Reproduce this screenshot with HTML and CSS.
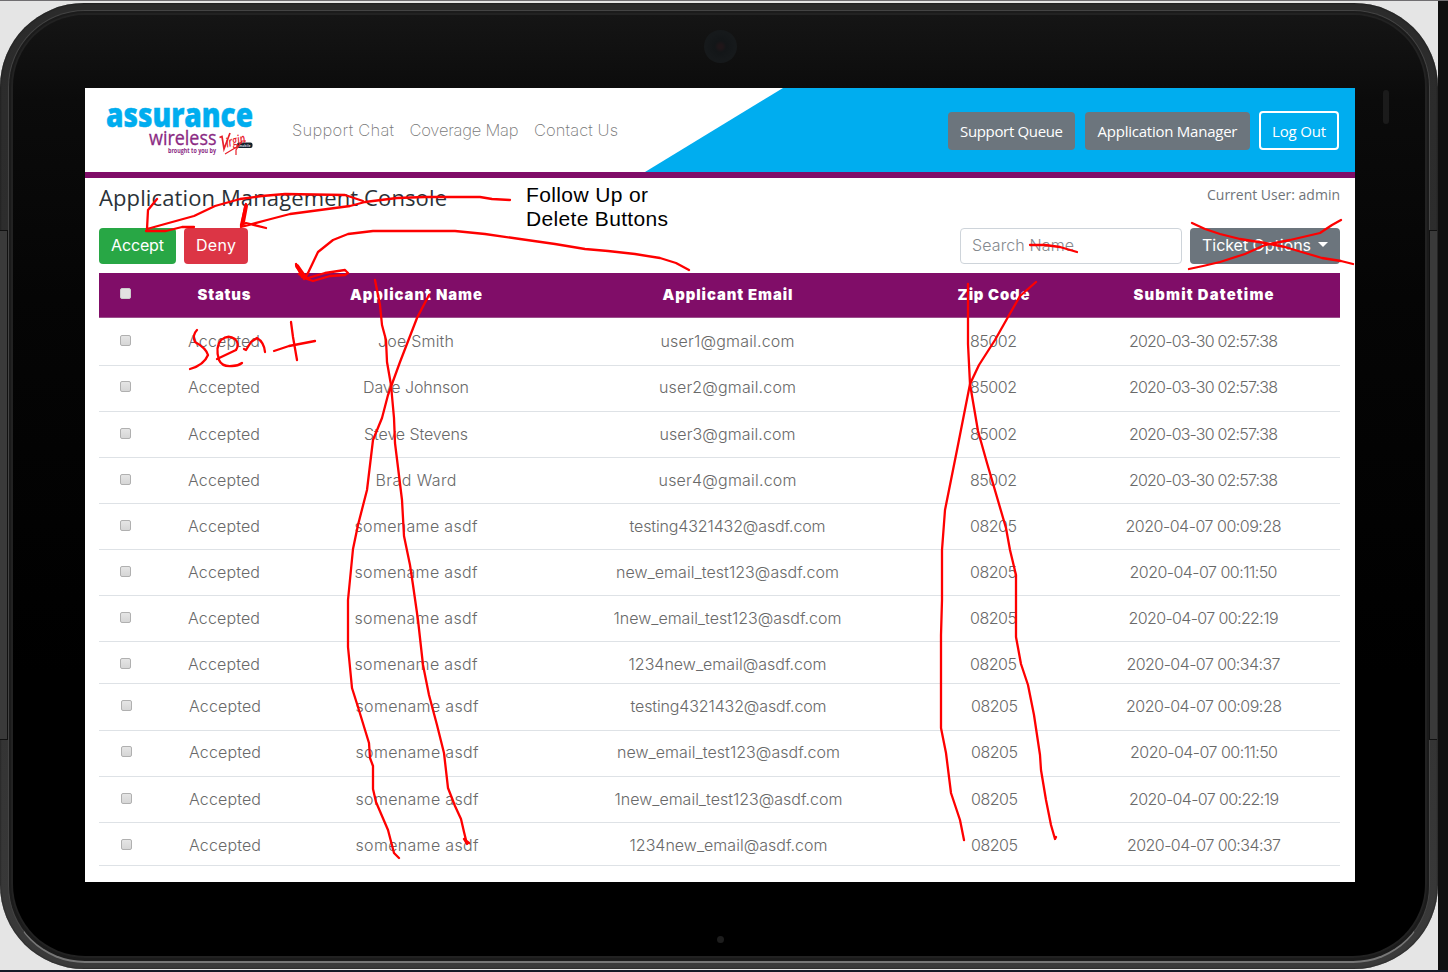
FILE: index.html
```html
<!DOCTYPE html>
<html lang="en">
<head>
<meta charset="utf-8">
<title>Application Management Console</title>
<link rel="stylesheet" href="styles.css">
</head>
<body>
<div class="stage">
  <div class="tablet">
    <div class="rim"><div class="rim-line"><div class="glass">
      <main class="screen">
        <header class="top">
          <svg class="swoosh" viewBox="0 0 1270 84"><path d="M698 0H1270V84H560Z" fill="#00adef"/></svg>
          <svg class="logo" viewBox="0 0 150 56">
            <text class="logo-main" x="0" y="23" textLength="147" lengthAdjust="spacingAndGlyphs">assurance</text>
            <text class="logo-sub" x="43" y="41" textLength="67.500" lengthAdjust="spacingAndGlyphs">wireless</text>
            <text class="logo-by" x="62" y="48.500" textLength="48" lengthAdjust="spacingAndGlyphs">brought to you by</text>
            <rect x="131" y="38.500" width="15.500" height="5.500" rx="2" fill="#12202b"/>
            <text class="logo-mobile" x="133" y="43" textLength="11.500" lengthAdjust="spacingAndGlyphs">mobile</text>
            <path d="M113.500 33.500L116 32.500L118 45L124 29" fill="none" stroke="#e8202a" stroke-width="1.700"/>
            <text class="logo-virgin" transform="translate(121 43.500) rotate(-15)" textLength="20" lengthAdjust="spacingAndGlyphs">irgin</text>
            <path d="M119 50L134 41M140 37H136L130 46L130 51" fill="none" stroke="#e8202a" stroke-width="1.200"/>
          </svg>
          <nav class="links">
            <a><span data-w="102">Support Chat</span></a>
            <a><span data-w="109">Coverage Map</span></a>
            <a><span data-w="84">Contact Us</span></a>
          </nav>
          <div class="actions">
            <button class="btn grey queue"><span data-w="103">Support Queue</span></button>
            <button class="btn grey manager"><span data-w="140">Application Manager</span></button>
            <button class="btn outline"><span data-w="54">Log Out</span></button>
          </div>
        </header>
        <section class="console">
          <div class="title-row">
            <h1><span data-w="348">Application Management Console</span></h1>
            <p class="user"><span data-w="133">Current User: admin</span></p>
          </div>
          <div class="tools">
            <button class="btn mont green"><span data-w="53">Accept</span></button>
            <button class="btn mont red"><span data-w="40">Deny</span></button>
            <div class="search"><span data-w="102">Search Name</span></div>
            <button class="btn mont grey options"><span data-w="109">Ticket Options</span><i class="caret"></i></button>
          </div>
          <div class="table" id="table">
            <div class="row head">
              <div><i class="check"></i></div>
              <div><span data-w="53">Status</span></div>
              <div><span data-w="132">Applicant Name</span></div>
              <div><span data-w="130">Applicant Email</span></div>
              <div><span data-w="72">Zip Code</span></div>
              <div><span data-w="140">Submit Datetime</span></div>
            </div>
          </div>
        </section>
      </main>
    </div></div></div>
    <i class="camera"></i><i class="mic"></i><i class="speaker"></i>
    <i class="side left"></i><i class="side right"></i>
  </div>
  <div class="edge"></div>
  <div class="bottom-bar"></div>
  <p class="note"><span data-w="122">Follow Up or</span><br><span data-w="142">Delete Buttons</span></p>
  <svg class="ink" viewBox="0 0 1448 972">
    <path d="M157 199L148 210L147 229L165 224L194 216L215 206L240 199L262 196L285 194L345 195L363 201"/>
    <path d="M146 231H166L182 227H194"/>
    <path d="M510 200L492 199L480 197H425L397 198L365 202L350 206L320 210L290 214L267 220L241 227L246 204L241 225L246 223L266 228"/>
    <path d="M243 222L246 206" stroke-width="4"/>
    <path d="M689 270L676 263L660 258L635 254L608 251L585 249L555 244L520 239L485 234L455 231H373L348 234L333 240L318 252L308 273L304 279L296 264L302 277L308 278L325 273L345 270L348 273L345 275L330 276L313 281L307 279L299 274"/>
    <path d="M297 266L304 276" stroke-width="4"/>
    <path d="M1030 245L1045 245L1060 247L1077 252"/>
    <path d="M1192 223L1205 229L1220 234L1240 239L1265 243L1285 247L1305 253L1322 258L1341 261L1353 264"/>
    <path d="M1189 269L1203 266L1220 262L1245 254L1265 245L1290 240L1320 233L1332 225L1341 220"/>
    <path d="M197 330Q192 335 195 342Q206 348 208 355Q204 365 190 369"/>
    <path d="M217 359L236 350Q240 344 235 339Q228 334 221 340Q215 347 219 360Q222 367 232 366Q238 366 242 363"/>
    <path d="M244 349L246 350L251 342L257 338Q264 342 265 352"/>
    <path d="M291 322L293 337L297 360M274 351L289 346L315 341"/>
    <path d="M375 280L380 305L382 325L386 340L387 362L391 385L394 418L395 443L402 500L404 536L410 565L413 585L418 620L423 665L429 695L437 725L444 753L448 788L455 806L461 819L464 832L467 844L464 839L469 843"/>
    <path d="M429 295L417 318L400 362L388 395L382 418L373 440L367 490L358 525L353 549L348 600V647L352 688L358 707L369 743L370 758L373 766V789L376 802L388 830L394 853L399 858"/>
    <path d="M968 284V344L970 384L978 431L987 463L1006 528L1010 550L1016 575V637L1021 664L1028 685L1034 715L1040 755L1041 770L1046 800L1051 825L1055 839L1056 837"/>
    <path d="M1036 282L1020 296L1008 317L995 340L979 365L970 384L957 450L945 510L942 550V600L941 635V728L946 753L951 793L960 820L964 840"/>
  </svg>
</div>
<script src="app.js"></script>
</body>
</html>
```
FILE: styles.css
```css
* { box-sizing: border-box; }
body { margin: 0; background: #e5e5e5; overflow: hidden; }
p, h1 { margin: 0; }
i { display: block; }
.stage { position: relative; width: 1448px; height: 972px; padding-top: 2px; border-top: 1px solid #706e71; overflow: hidden; }
.tablet { position: relative; width: 1438px; height: 966px; }
.rim { height: 966px; width: 1438px; border-radius: 84px; padding: 7px 8px 6px; background: linear-gradient(180deg, #2b2b2b, #303030 60%, #3a3a3a); box-shadow: inset 0 0 2px #111; }
.rim-line { height: 100%; border-radius: 77px; border: 1px solid #444; border-bottom: 2px solid #777; background: #1b1b1b; padding: 4px 4px 5px; }
.glass { height: 100%; border-radius: 72px; padding: 73px 0 0 72px; background: linear-gradient(180deg, #151515, #0b0b0b 9%, #050505 30%, #000 70%); box-shadow: 0 0 0 2px #222; }
.screen { width: 1270px; height: 794px; background: #fff; overflow: hidden; font-family: "Open Sans", "Noto Sans", sans-serif; }
.top { position: relative; height: 90px; border-bottom: 6px solid #800d68; display: flex; align-items: center; }
.swoosh { position: absolute; left: 0; top: 0; width: 1270px; height: 84px; }
.logo { position: relative; width: 150px; height: 56px; margin: 4px 0 0 21px; overflow: visible; flex: none; }
.logo-main { font: 800 34px "Open Sans", sans-serif; fill: #00adef; stroke: #00adef; stroke-width: .5px; }
.logo-sub { font: 400 20px "Open Sans", sans-serif; fill: #8b2a83; stroke: #8b2a83; stroke-width: .3px; }
.logo-by { font: 700 7px "Open Sans", sans-serif; fill: #8b2a83; }
.logo-mobile { font: 700 4px "Open Sans", sans-serif; fill: #cdd5da; }
.logo-virgin { font: italic 600 13px "Open Sans", sans-serif; fill: #e8202a; }
.links { display: flex; gap: 15.5px; margin-left: 36px; font: 200 16.5px/24px Inter, sans-serif; color: #777; }
.actions { position: relative; display: flex; gap: 10px; margin-left: auto; padding-right: 16px; padding-top: 1px; }
.btn { display: flex; align-items: center; justify-content: center; height: 36px; padding: 0; border: 0; border-radius: 4px; color: #fff; font: 400 15px "Open Sans", sans-serif; }
.grey { background: #6c757d; }
.queue { width: 127px; height: 38px; }
.manager { width: 165px; height: 38px; }
.outline { width: 80px; height: 39px; margin-left: -1px; margin-top: -1px; padding-top: 1px; background: none; border: 2px solid #fff; }
.console { padding: 0 15px 0 14px; }
.title-row { display: flex; justify-content: space-between; height: 50px; color: #2b3238; }
h1 { font: 400 22px/39px "Open Sans", sans-serif; }
.user { font-size: 14px; line-height: 34px; color: #6f7479; }
.tools { display: flex; height: 45px; gap: 8px; }
.mont { font: 400 16px Inter, sans-serif; padding-bottom: 2px; }
.green { width: 77px; background: #28a745; }
.red { width: 64px; background: #dc3545; }
.search { width: 222px; height: 36px; margin-left: auto; padding-left: 11px; border: 1px solid #ced4da; border-radius: 4px; font: 300 16px/33px Inter, sans-serif; color: #85898e; }
.options { width: 150px; gap: 7px; }
.caret { border: 5px solid transparent; border-top-color: #fff; border-bottom: 0; margin-top: -1px; }
.table { font: 300 16px/20px Inter, sans-serif; color: #696969; }
.row { display: grid; grid-template-columns: 52px 146px 238px 385px 147px 1fr; height: 46.15px; border-bottom: 1px solid #dee2e6; padding-top: 11.800px; text-align: center; }
.head { height: 45px; padding-top: 12px; margin-bottom: 1.5px; background: #800d68; color: #fff; font-weight: 900; font-size: 14.800px; border-bottom-color: #9b4f8c; }
.short { height: 42px; }
.last { height: 43px; }
.late { padding-left: 1px; }
.check { width: 11px; height: 11px; margin: 4px auto 0; border: 1px solid #b0b0b0; border-radius: 2px; background: linear-gradient(#e5e5e5, #d6d6d6); }
.head .check { margin-top: 3px; border-color: #ccc; background: #e2e2e2; }
.camera { position: absolute; left: 704px; top: 27px; width: 33px; height: 33px; border-radius: 50%; background: radial-gradient(#201619 0 8%, #131618 25%, #16191b 60%, #171a1b); }
.mic { position: absolute; left: 717px; top: 933px; width: 7px; height: 7px; border-radius: 50%; background: #1d1d1d; }
.speaker { position: absolute; left: 1383px; top: 87px; width: 6px; height: 34px; border-radius: 3px; background: #1b1b1b; }
.side { position: absolute; top: 227px; height: 510px; border: 1px solid #111; background: #3a3a3a; }
.side.left { left: 0; width: 8px; border-left: 0; }
.side.right { left: 1429px; width: 8px; border-right: 0; }
.edge { position: absolute; right: 0; top: 0; width: 10px; height: 972px; background: #0f0f0f; }
.bottom-bar { position: absolute; left: 0; top: 969px; width: 1448px; height: 3px; background: #151a28; }
.note { position: absolute; left: 526px; top: 182px; font: 21px/24px "Liberation Sans", Arial, sans-serif; color: #000; }
.ink { position: absolute; left: 0; top: -1px; width: 1448px; height: 972px; fill: none; stroke: #fe0000; stroke-width: 2.300; stroke-linecap: round; stroke-linejoin: round; }
[data-w] { display: inline-block; white-space: nowrap; }
```
FILE: app.js
```js
const emails = {
  'user1@gmail.com': 134, 'user2@gmail.com': 137, 'user3@gmail.com': 136, 'user4@gmail.com': 138,
  'testing4321432@asdf.com': 196, 'new_email_test123@asdf.com': 223,
  '1new_email_test123@asdf.com': 228, '1234new_email@asdf.com': 198
};
const widths = {
  ...emails, 'Accepted': 72, 'Joe Smith': 76, 'Dave Johnson': 106, 'Steve Stevens': 104,
  'Brad Ward': 81, 'somename asdf': 123, '85002': 47, '08205': 47,
  '2020-03-30 02:57:38': 149, '2020-04-07 00:09:28': 156, '2020-04-07 00:11:50': 148,
  '2020-04-07 00:22:19': 150, '2020-04-07 00:34:37': 154
};
const first = ['Joe Smith', 'Dave Johnson', 'Steve Stevens', 'Brad Ward'];
const later = [
  ['testing4321432@asdf.com', '00:09:28'],
  ['new_email_test123@asdf.com', '00:11:50'],
  ['1new_email_test123@asdf.com', '00:22:19'],
  ['1234new_email@asdf.com', '00:34:37']
];
const rows = first.map((n, i) => [n, `user${i + 1}@gmail.com`, '85002', '2020-03-30 02:57:38']);
for (let i = 0; i < 9; i++) {
  const [mail, time] = later[i % 4];
  rows.push(['somename asdf', mail, '08205', '2020-04-07 ' + time]);
}
const table = document.getElementById('table');
rows.forEach((r, i) => {
  const row = document.createElement('div');
  row.className = 'row' + (i === 7 ? ' short' : '') + (i === 11 ? ' last' : '') + (i > 7 ? ' late' : '');
  row.innerHTML = '<div><i class="check"></i></div>' +
    ['Accepted', ...r].map(t => `<div><span data-w="${widths[t]}">${t}</span></div>`).join('');
  table.append(row);
});

document.querySelectorAll('[data-w]').forEach(el => {
  const gap = (el.dataset.w - el.getBoundingClientRect().width) / (el.textContent.length - 1);
  el.style.letterSpacing = gap + 'px';
  el.style.marginRight = -gap + 'px';
});
```
